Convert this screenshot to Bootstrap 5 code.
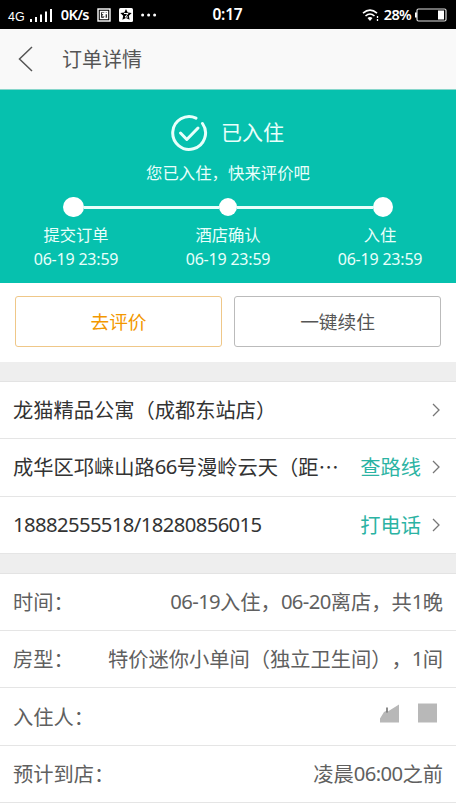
<!DOCTYPE html>
<html lang="zh-CN">
<head>
<meta charset="utf-8">
<meta name="viewport" content="width=device-width, initial-scale=1">
<title>订单详情</title>
<link href="https://cdn.jsdelivr.net/npm/bootstrap@5.3.0/dist/css/bootstrap.min.css" rel="stylesheet">
<style>
body{font-family:"Noto Sans","Noto Sans CJK SC",sans-serif;background:#fff;color:#333;line-height:1;overflow:hidden;text-spacing-trim:space-all}
svg{display:block;flex:none}
.statusbar{height:29px;background:#000;color:#fff;display:grid;grid-template-columns:1fr auto 1fr;padding:0 9px 0 8px;font-size:14.5px}
.net-type{font-size:12.5px;padding-top:5px;font-family:"Liberation Sans",sans-serif}
.net-speed{margin-left:8px;letter-spacing:-.6px}
.status-icon{margin-left:8px}
.clock{font-size:15.5px;letter-spacing:-.2px}
.charge{margin:0 3px 0 4px;letter-spacing:-.7px}
.topbar{height:61px;background:#f9f9f9;border-bottom:1px solid #86d6cb;padding-left:18px;color:#555}
.topbar h1{font-size:20px;margin:2px 0 0 28px;line-height:28px;font-weight:400}
.hero{height:193px;background:#06c1ae;color:#e9fffb}
.hero-title{font-size:21px;line-height:28px;padding:24px 2px 0 0;gap:13px}
.hero-title span{margin-top:-3px}
.hero-sub{font-size:16.4px;line-height:20px;margin-top:11px}
.steps{display:grid;grid-template-columns:repeat(3,152px);justify-content:center;margin-top:13px;font-size:16.3px}
.step-rail{height:22px;display:flex;align-items:center}
.step-rail i{height:3px;flex:1;background:#e9fffb}
.step-rail i.blank{background:none}
.first-step i.blank,.last-step i.blank{flex:0 0 63px}
.step-rail b{width:20.5px;height:20.5px;border-radius:50%;background:#fff}
.step-rail b.mid{width:18px;height:18px}
.step-name{line-height:24px;margin-top:5px}
.step-time{font-size:16px;line-height:24px;letter-spacing:-.2px}
.actions{height:79px;padding:13px 15px 15px;gap:12px}
.actions .btn{height:51px;border-radius:3px;font-size:18.7px;line-height:1;padding:2px 0 0;flex:1;background:#fff}
.actions .btn-review{color:#f39800;border-color:#efc788}
.actions .btn-renew{color:#555;border-color:#bbb}
.divide{height:19px;background:#eee}
.rows{font-size:20.25px;border-top:1px solid #e3e3e3}
.rows>div{height:57.3px;border-bottom:1px solid #e5e5e5;padding:0 13px;line-height:30px;white-space:nowrap}
.num{letter-spacing:-.6px;position:relative;top:-1px}
.cjk{font-family:"Noto Sans CJK SC",sans-serif}
.go{color:#2bb3a3}
.detail{color:#606060}
.arrow{margin:0 3px 0 11px}
.guest{margin:0 5px 7px 0}
</style>
</head>
<body>
<header class="statusbar align-items-center">
  <div class="d-flex align-items-center">
    <span class="net-type">4G</span>
    <svg width="24" height="15" viewBox="0 0 24 15" class="ms-1" fill="#fff"><path d="M1 12h2v3H1zM6 10h2v5H6zM11 7.500h2V15h-2zM16 4.500h2V15h-2zM21 2h2v13h-2z"/></svg>
    <span class="fw-semibold net-speed">0K/s</span>
    <svg class="status-icon" width="14" height="14" viewBox="0 0 14 14" fill="none" stroke="#fff" stroke-width="1.400"><rect x="1" y="1" width="12" height="12"/><path d="M3.500 3.500h7v7h-7zM5 5.500h5M8 4v5.500H6.800M8 5.500l-2.500 3"/></svg>
    <svg class="status-icon" width="14" height="14" viewBox="0 0 14 14"><rect width="14" height="14" rx="1.500" fill="#fff"/><path d="M7 1l1.700 3.600 4 .5-2.900 2.700.8 4L7 10l-3.600 1.800.8-4L1.300 5.100l4-.5z" fill="#000"/><path d="M5 5.500h4L6 9h3" fill="none" stroke="#fff"/></svg>
    <svg class="status-icon" width="16" height="4" viewBox="0 0 16 4" fill="#fff"><circle cx="1.600" cy="2" r="1.500"/><circle cx="7.600" cy="2" r="1.500"/><circle cx="13.600" cy="2" r="1.500"/></svg>
  </div>
  <span class="fw-semibold clock">0:17</span>
  <div class="d-flex align-items-center justify-content-end">
    <svg width="18" height="14" viewBox="0 0 18 14" fill="none" stroke="#fff" stroke-width="1.600"><path d="M1 5.200q7-6 14 0M3.500 8q4.500-4 9 0"/><path d="M5.500 10q2.500-2 5 0L8 13z" fill="#fff" stroke="none"/><path d="M15.500 8v2M15.500 11v2" stroke-width="1.300"/></svg>
    <span class="fw-semibold charge">28%</span>
    <svg width="33" height="14" viewBox="0 0 33 14"><path d="M3 4.500H1v5h2" fill="#fff"/><rect x="3" y="1" width="29" height="12" rx="1.500" fill="none" stroke="#ddd" stroke-width="1.200"/><path d="M24 2.500h6v9h-6z" fill="#fff"/></svg>
  </div>
</header>
<nav class="topbar d-flex align-items-center">
  <svg width="16" height="26" viewBox="0 0 16 26" fill="none" stroke="#555" stroke-width="1.500"><path d="M14 1L1.500 13 14 25"/></svg>
  <h1>订单详情</h1>
</nav>
<section class="hero text-center">
  <div class="hero-title d-flex justify-content-center align-items-center">
    <svg width="38" height="38" viewBox="0 0 38 38" fill="none" stroke="#e9fffb" stroke-width="3" stroke-linecap="round" stroke-linejoin="round"><path d="M26 4.100A16.400 16.400 0 1 0 32.500 9.500"/><path d="M10.500 19l6.300 6.500L28 14"/></svg>
    <span>已入住</span>
  </div>
  <div class="hero-sub">您已入住，快来评价吧</div>
  <div class="steps">
    <div><div class="step-rail first-step"><i class="blank"></i><b></b><i></i></div><div class="step-name">提交订单</div><div class="step-time">06-19 23:59</div></div>
    <div><div class="step-rail"><i></i><b class="mid"></b><i></i></div><div class="step-name">酒店确认</div><div class="step-time">06-19 23:59</div></div>
    <div><div class="step-rail last-step"><i></i><b></b><i class="blank"></i></div><div class="step-name">入住</div><div class="step-time">06-19 23:59</div></div>
  </div>
</section>
<div class="actions d-flex">
  <button class="btn btn-review">去评价</button>
  <button class="btn btn-renew">一键续住</button>
</div>
<div class="divide"></div>
<section class="rows">
  <div class="d-flex align-items-center justify-content-between"><span>龙猫精品公寓（成都东站店）</span><svg class="arrow" width="8" height="14" viewBox="0 0 8 14" fill="none" stroke="#777" stroke-width="1.300"><path d="M1 1l6 6-6 6"/></svg></div>
  <div class="d-flex align-items-center"><span class="me-auto">成华区邛崃山路<span class="num">66</span>号漫岭云天（距<span class="cjk">…</span></span><span class="go">查路线</span><svg class="arrow" width="8" height="14" viewBox="0 0 8 14" fill="none" stroke="#777" stroke-width="1.300"><path d="M1 1l6 6-6 6"/></svg></div>
  <div class="d-flex align-items-center"><span class="me-auto num">18882555518/18280856015</span><span class="go">打电话</span><svg class="arrow" width="8" height="14" viewBox="0 0 8 14" fill="none" stroke="#777" stroke-width="1.300"><path d="M1 1l6 6-6 6"/></svg></div>
</section>
<div class="divide"></div>
<section class="rows detail">
  <div class="d-flex align-items-center justify-content-between"><span>时间：</span><span><span class="num">06-19</span>入住，<span class="num">06-20</span>离店，共<span class="num">1</span>晚</span></div>
  <div class="d-flex align-items-center justify-content-between"><span>房型：</span><span>特价迷你小单间（独立卫生间），<span class="num">1</span>间</span></div>
  <div class="d-flex align-items-center justify-content-between"><span>入住人：</span><svg class="guest" width="58" height="20" viewBox="0 0 58 20"><path d="M0 19.500v-4L4 9l2-1 1 1 12-7.500v18z" fill="#b8b8b8"/><path d="M7 4.500v5" stroke="#666" stroke-width="1.500"/><path d="M38 .5h19v19H38z" fill="#b8b8b8"/></svg></div>
  <div class="d-flex align-items-center justify-content-between"><span>预计到店：</span><span>凌晨<span class="num">06:00</span>之前</span></div>
</section>
<script src="https://cdn.jsdelivr.net/npm/bootstrap@5.3.0/dist/js/bootstrap.bundle.min.js"></script>
</body>
</html>
